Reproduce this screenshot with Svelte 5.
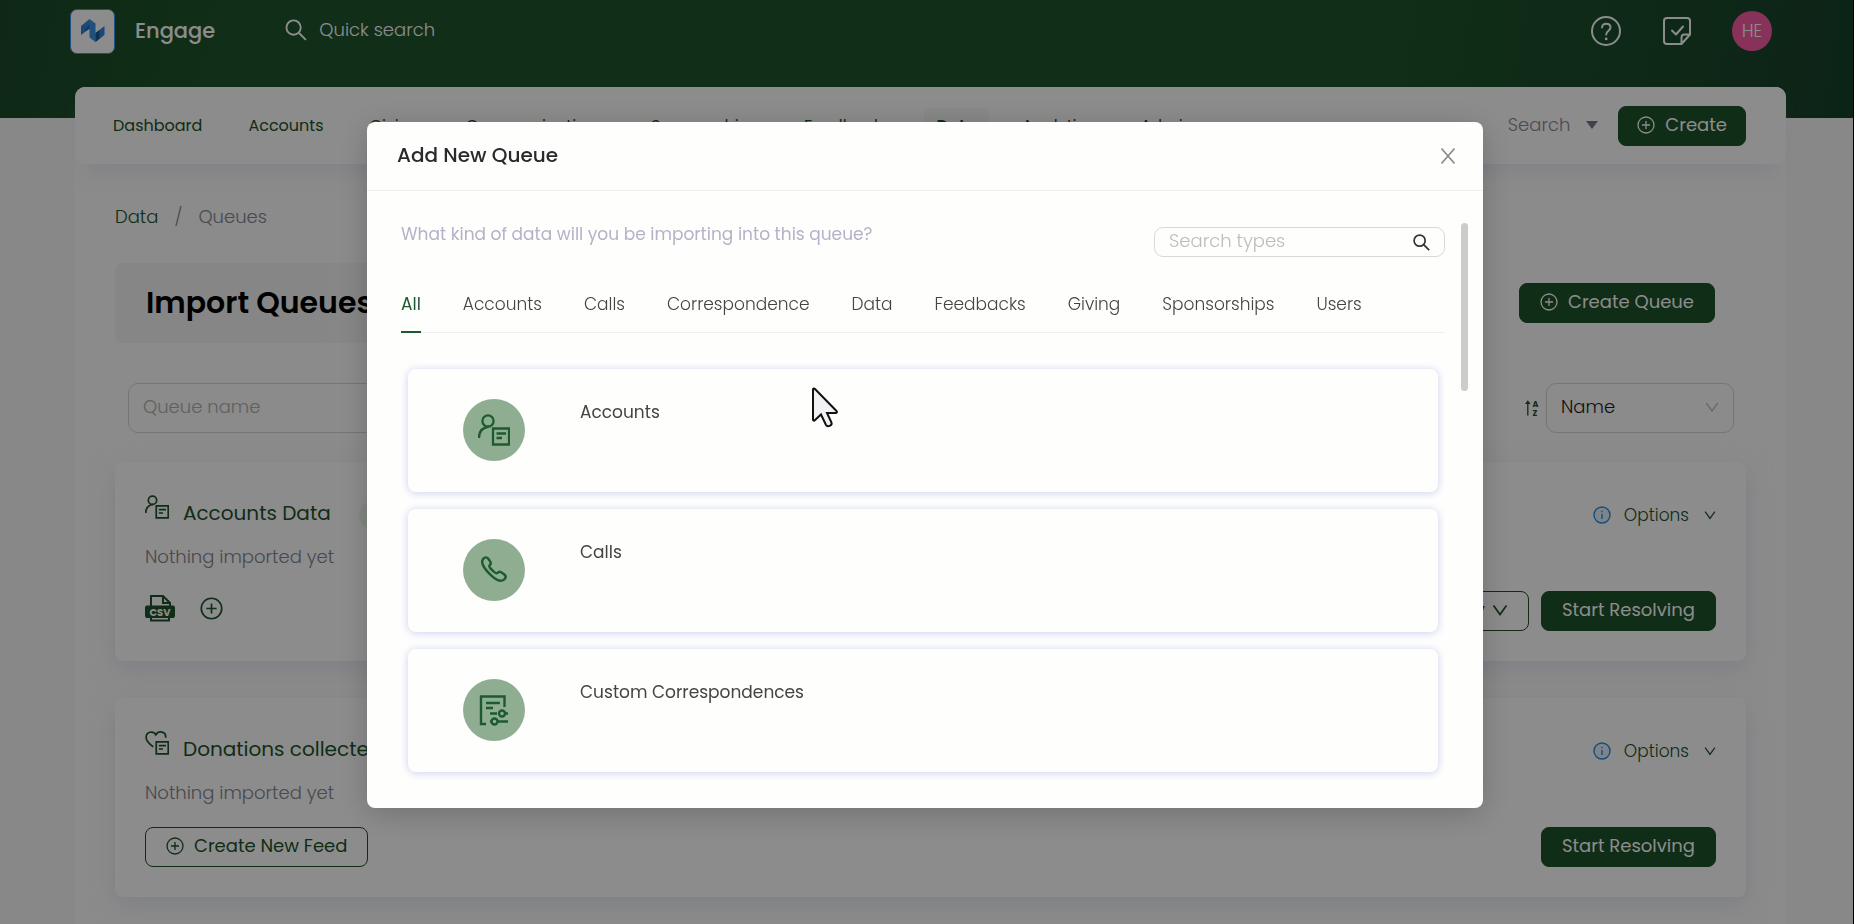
<script>
  const navBefore = ['Dashboard', 'Accounts', 'Giving', 'Communications', 'Sponsorships', 'Feedbacks'];
  const navAfter = ['Analytics', 'Admin'];
  const tabs = ['All', 'Accounts', 'Calls', 'Correspondence', 'Data', 'Feedbacks', 'Giving', 'Sponsorships', 'Users'];
  const types = [
    { name: 'Accounts', icon: 'account' },
    { name: 'Calls', icon: 'phone' },
    { name: 'Custom Correspondences', icon: 'custom' }
  ];
  let activeTab = $state('All');
</script>

{#snippet plus(size)}
  <svg width={size} height={size} viewBox="0 0 18 18" fill="none" stroke="currentColor" stroke-width="1.3" aria-hidden="true">
    <circle cx="9" cy="9" r="8" /><path d="M9 5v8M5 9h8" />
  </svg>
{/snippet}

{#snippet chevron(size, weight)}
  <svg width={size} height={size} viewBox="0 0 16 16" fill="none" stroke="currentColor" stroke-width={weight} aria-hidden="true">
    <path d="M1.5 3.5 8 12.5l6.500-9" />
  </svg>
{/snippet}

{#snippet account(size)}
  <svg width={size} height={size} viewBox="0 0 32 32" fill="none" stroke="currentColor" stroke-width="2.300" aria-hidden="true">
    <circle cx="10" cy="7" r="5.600" />
    <path d="M1 24c0-6 3.500-10.500 10-11.500M15 14.500h16v16H15zM18.500 19.500h9.500M18.500 24h5.500" />
  </svg>
{/snippet}

{#snippet heart(size)}
  <svg width={size} height={size} viewBox="0 0 32 32" fill="none" stroke="currentColor" stroke-width="2.300" aria-hidden="true">
    <path d="M11 21C5 16.500 1.500 13 1.500 8.500c0-7.500 9.500-9.500 13-3.500 3.500-6 14-4.500 13 4M15 14.500h16v16H15zM18.500 19.500h9.500M18.500 24h5.500" />
  </svg>
{/snippet}

{#snippet search(size, weight)}
  <svg width={size} height={size} viewBox="0 0 20 20" fill="none" stroke="currentColor" stroke-width={weight} aria-hidden="true">
    <circle cx="7.800" cy="7.800" r="6.500" /><path d="M12.500 12.500 19 19" />
  </svg>
{/snippet}

{#snippet options()}
  <div class="options">
    <svg width="18" height="18" viewBox="0 0 18 18" fill="none" stroke="#2b8cdf" stroke-width="1.400" aria-hidden="true">
      <circle cx="9" cy="9" r="8" fill="#e3f1fc" /><path d="M9 8v5M9 4.800v1.500" />
    </svg>
    <button class="plain">Options {@render chevron(12, 1.6)}</button>
  </div>
{/snippet}

<div class="app">
  <header class="top">
    <a class="brand" href="#home">
      <span class="logo">
        <svg width="24" height="24" viewBox="0 0 24 24" aria-hidden="true">
          <path fill="#2f86d8" d="M0 7 8.500 0 10 9 4.500 12.500 0 16z" />
          <path fill="#3b93e4" d="M8.500 0 14.500 4.500V23L8.500 18.500z" />
          <path fill="#1f6cb0" d="M4.500 9.500 8.500 6v3.500l-4 3z" />
          <path fill="#2f86d8" d="M14.500 14 23.500 7v9l-9 7z" />
          <path fill="#1a5c98" d="m14.500 14 4-3v8.500l-4 3.500z" />
        </svg>
      </span>
      <span>Engage</span>
    </a>
    <button class="quick">{@render search(22, 1.7)} Quick search</button>
    <div class="top-actions">
      <button class="bare" aria-label="Help">
        <svg width="32" height="32" viewBox="0 0 32 32" fill="none" stroke="currentColor" stroke-width="2" stroke-linecap="round">
          <circle cx="16" cy="16" r="14" /><path d="M12 12.500c.3-5 8.500-5 8.500 0 0 3.200-4.300 3.200-4.300 7" /><path d="M16.200 23.800v.1" stroke-width="2.600" />
        </svg>
      </button>
      <button class="bare" aria-label="Tasks">
        <svg width="30" height="30" viewBox="0 0 30 30" fill="none" stroke="currentColor" stroke-width="2" stroke-linecap="round" stroke-linejoin="round">
          <path d="M28 18.500V5a3 3 0 0 0-3-3H5a3 3 0 0 0-3 3v20a3 3 0 0 0 3 3h14.500zM28 18.500h-5.500a3 3 0 0 0-3 3V28M10 14.500l4 4 7-8" />
        </svg>
      </button>
      <span class="avatar">HE</span>
    </div>
  </header>

  <main class="sheet">
    <nav class="nav">
      {#each navBefore as item}<a href="#{item}">{item}</a>{/each}
      <a class="current" href="#Data">Data</a>
      {#each navAfter as item}<a href="#{item}">{item}</a>{/each}
      <div class="nav-end">
        <button class="scope">Search <span class="caret"></span></button>
        <button class="primary">{@render plus(18)} Create</button>
      </div>
    </nav>

    <div class="content">
      <div class="crumbs"><a href="#Data">Data</a><span>/</span><span>Queues</span></div>

      <div class="title-row">
        <h1>Import Queues</h1>
        <button class="primary">{@render plus(18)} Create Queue</button>
      </div>

      <div class="filters">
        <input type="text" placeholder="Queue name" aria-label="Queue name" />
        <div class="sort">
          <svg width="16" height="24" viewBox="0 0 16 24" aria-hidden="true">
            <path d="M3.800 19.500V6" fill="none" stroke="#1d522a" stroke-width="1.300" />
            <path d="M1 8 3.800 4.300 6.600 8z" fill="#1d522a" />
            <text x="8.500" y="11" font-size="8" font-weight="700" fill="#1d522a">A</text>
            <text x="8.500" y="19.500" font-size="8" font-weight="700" fill="#1d522a">Z</text>
          </svg>
          <div class="select">
            <select aria-label="Sort by"><option>Name</option></select>
            {@render chevron(14, 1.3)}
          </div>
        </div>
      </div>

      <section class="queue">
        <div class="line">
          <h2>{@render account(24)} <span>Accounts Data</span> <i class="badge"></i></h2>
          {@render options()}
        </div>
        <p>Nothing imported yet</p>
        <div class="line">
          <div class="feeds">
            <svg width="30" height="28" viewBox="0 0 30 28" aria-hidden="true">
              <path d="M6 12V2h12l7 7v4M6 22v4.500h18V22M18 2v7h7" fill="none" stroke="#1d522a" stroke-width="2" />
              <rect x="0" y="11.500" width="30" height="12.500" rx="2" fill="#1d522a" />
              <text x="15" y="21.500" text-anchor="middle" font-size="10" font-weight="700" fill="#fff">CSV</text>
            </svg>
            <button class="bare" aria-label="Add feed">{@render plus(23)}</button>
          </div>
          <div class="actions">
            <button class="outline history">History {@render chevron(16, 1.7)}</button>
            <button class="primary">Start Resolving</button>
          </div>
        </div>
      </section>

      <section class="queue">
        <div class="line">
          <h2>{@render heart(24)} <span>Donations collected</span></h2>
          {@render options()}
        </div>
        <p>Nothing imported yet</p>
        <div class="line">
          <button class="outline">{@render plus(18)} Create New Feed</button>
          <button class="primary">Start Resolving</button>
        </div>
      </section>
    </div>
  </main>
</div>

<div class="overlay">
  <div class="modal" role="dialog" aria-modal="true" aria-labelledby="modal-title">
    <header class="modal-head">
      <h3 id="modal-title">Add New Queue</h3>
      <button class="bare" aria-label="Close">
        <svg width="16" height="16" viewBox="0 0 16 16" fill="none" stroke="currentColor" stroke-width="1.600"><path d="m1.500.5 13 15M14.500.5l-13 15" /></svg>
      </button>
    </header>
    <div class="modal-body">
      <div class="ask">
        <p>What kind of data will you be importing into this queue?</p>
        <label class="find">
          <input type="text" placeholder="Search types" aria-label="Search types" />
          {@render search(17, 2)}
        </label>
      </div>
      <div class="tabs" role="tablist">
        {#each tabs as tab}
          <button role="tab" aria-selected={tab === activeTab} class:active={tab === activeTab} onclick={() => (activeTab = tab)}>{tab}</button>
        {/each}
      </div>
      <div class="types">
        {#each types as type}
          <button class="type">
            <span class="disc">
              {#if type.icon === 'account'}
                {@render account(32)}
              {:else if type.icon === 'phone'}
                <svg width="31" height="31" viewBox="0 0 34 34" fill="none" stroke="currentColor" stroke-width="2.700" stroke-linejoin="round">
                  <path d="M4.500 4.500C6.500 2 8.500 2 10.500 4.500l2 3c1.200 2 0 3-1 4-.8 1 .3 2.500 3 5.200s4.500 4 5.500 3.200c1-1 2.500-2.200 4.300-1l3.500 2.400c2.200 1.700 2 3.700-.4 5.700-3 2.500-7.500 1.500-14.400-5S1.500 8.500 4.500 4.500z" />
                </svg>
              {:else}
                <svg width="34" height="34" viewBox="0 0 34 34" fill="none" stroke="currentColor" stroke-width="2.400">
                  <path d="M9 31H4V3.500h23.500V14M9 10h14M9 15h7M13 20.500h7M27 20.500h4M13 28.500h1M21 28.500h10" />
                  <circle cx="25" cy="20.500" r="3" /><circle cx="17.500" cy="28.500" r="3" />
                </svg>
              {/if}
            </span>
            <span class="type-name">{type.name}</span>
          </button>
        {/each}
      </div>
      <span class="thumb"></span>
    </div>
  </div>
  <svg class="pointer" width="28" height="42" viewBox="0 0 28 42" aria-hidden="true">
    <path d="M2 2.500v30c0 1.200 1 1.500 1.800.7L10 27.500l5 10.500c1.500 2.500 6.500.8 5.500-2.500L16 26h8.500c1.500 0 1.800-1.200 1-2L4 2c-.9-.8-2-.5-2 .5z" fill="#f2f2f4" stroke="#111" stroke-width="2" />
  </svg>
</div>

<style>
  :global(body) { background: #f8f8fa; overflow: hidden; }
  :global(*) { box-sizing: border-box; }
  .app, .overlay { font-family: Poppins, Inter, sans-serif; font-size: 17px; line-height: 24px; color: #1d522a; }
  .app { height: 100vh; overflow: hidden; background: #f8f8fa; }
  a { color: inherit; text-decoration: none; }
  button, input, select { font: inherit; color: inherit; }
  button { display: inline-flex; align-items: center; border: 0; padding: 0; background: none; cursor: pointer; white-space: nowrap; }
  svg { flex: none; display: block; }
  h1, h2, h3, p { margin: 0; }

  .top { display: flex; align-items: center; height: 118px; padding: 0 82px 56px 70px; color: #fff; background: linear-gradient(100deg, #1b4a27 0, #1e542c 12%, #1e542c 75%, #1b4b2a 88%, #17402a 100%); }
  .brand { display: flex; align-items: center; gap: 20px; font-size: 21px; font-weight: 500; }
  .logo { display: grid; place-items: center; width: 45px; height: 45px; border-radius: 7px; background: #fff; border: 1px solid #3b93e4; }
  .quick { gap: 12px; margin-left: 70px; padding-bottom: 2px; font-size: 18px; font-weight: 300; }
  .top-actions { display: flex; align-items: center; gap: 40px; margin-left: auto; }
  .avatar { display: grid; place-items: center; width: 40px; height: 40px; border-radius: 50%; background: #f85ca5; font-size: 17px; font-weight: 300; }

  .sheet { min-height: 900px; margin: -31px 68px 0 75px; border-radius: 10px; background: #fdfdfd; }
  .nav { display: flex; align-items: center; gap: 46px; height: 77px; padding: 0 40px 0 38px; border-radius: 10px; background: #fff; box-shadow: 0 18px 20px -10px #dfe1ee90; }
  .nav > a { font-size: 16px; line-height: 36px; }
  .nav .current { margin: 0 -13px; padding: 0 13px; border-radius: 8px; background: #f8f8f8; font-weight: 600; }
  .nav-end { display: flex; gap: 20px; align-items: center; margin-left: auto; }
  .scope { gap: 16px; padding-bottom: 2px; font-size: 18px; font-weight: 300; color: #8a8a98; }
  .caret { border: 6px solid transparent; border-top: 8px solid #777785; border-bottom: 0; }
  .primary, .outline { justify-content: center; gap: 10px; height: 40px; padding: 0 20px 2px; border: 1px solid #1d522a; border-radius: 8px; font-size: 18px; }
  .nav .primary { padding: 0 18px 2px; }
  .primary { background: #1d522a; color: #fff; }

  .content { padding: 41px 40px 0; }
  .crumbs { display: flex; gap: 16px; font-size: 18px; font-weight: 300; }
  .crumbs span { color: #85858f; }
  .title-row { display: flex; align-items: center; justify-content: space-between; height: 80px; margin-top: 34px; padding: 0 31px; border-radius: 8px; background: linear-gradient(90deg, #f4f4f5 0, #fdfdfd 80%); }
  h1 { font-size: 30px; line-height: 40px; font-weight: 600; color: #000; }
  .filters { display: flex; justify-content: space-between; margin: 40px 12px 29px 13px; }
  .filters input, .select { height: 50px; padding: 0 14px 2px; border: 1px solid #d5d5d8; border-radius: 10px; background: none; }
  .filters input { width: 45%; padding-bottom: 4px; font-size: 18px; font-weight: 300; }
  .filters input::placeholder { color: #b0b0b0; opacity: 1; }
  .sort { display: flex; align-items: center; gap: 6px; }
  .select { display: flex; align-items: center; width: 188px; color: #b8b8b8; }
  select { flex: 1; appearance: none; border: 0; background: none; color: #222; font-weight: 300; font-size: 18px; }

  .queue { height: 199px; margin-bottom: 37px; padding: 31px 30px 0; border-radius: 8px; background: #fff; box-shadow: 0 8px 24px #d4d8ea90; }
  .line { display: flex; align-items: center; justify-content: space-between; }
  .queue h2 { display: flex; gap: 14px; font-size: 20px; line-height: 24px; font-weight: 400; }
  .queue h2 span { padding-top: 6px; }
  .badge { width: 60px; height: 28px; margin: 6px 0 -4px 14px; border-radius: 14px; background: #eef7ea; }
  .options { display: flex; align-items: center; gap: 13px; padding-top: 10px; }
  .plain { gap: 15px; font-size: 17px; font-weight: 300; }
  .queue p { margin: 18px 0 22px; font-size: 18px; font-weight: 300; color: #85858f; }
  .feeds { display: flex; align-items: center; gap: 25px; padding-bottom: 6px; }
  .actions { display: flex; gap: 12px; }
  .history { gap: 7px; }

  .overlay { position: fixed; inset: 0; display: flex; justify-content: center; align-items: flex-start; padding: 122px 67px 0 64px; border-right: 1px solid #000; background: rgba(0, 0, 0, 0.45); }
  .modal { width: 100%; max-width: 1116px; border-radius: 8px; background: #fefefd; box-shadow: 0 6px 32px rgba(0, 0, 0, 0.2); color: #444; }
  .modal-head { display: flex; align-items: center; justify-content: space-between; height: 69px; padding: 0 27px 0 30px; border-bottom: 1px solid #f0f0f0; color: #888; }
  h3 { padding-bottom: 2px; font-size: 20px; font-weight: 500; color: #2a2a2d; }
  .modal-body { position: relative; padding: 31px 38px 36px 34px; }
  .ask { display: flex; justify-content: space-between; font-size: 17px; font-weight: 400; color: #b3b3c8; }
  .find { display: flex; align-items: center; width: 291px; height: 30px; margin-top: 5px; padding: 0 14px; border: 1px solid #d9d9d9; border-radius: 9px; color: #333; }
  .find input { flex: 1; min-width: 0; padding: 0 0 2px; border: 0; background: none; outline: none; font-size: 18px; font-weight: 300; }
  .find input::placeholder { color: #bcbcbf; opacity: 1; }
  .tabs { display: flex; gap: 42px; height: 58px; margin: 18px 0 36px; border-bottom: 1px solid #f0f0f0; }
  .tabs button { height: 58px; padding-top: 2px; border-bottom: 2px solid transparent; font-weight: 300; }
  .tabs .active { color: #1d5a30; border-color: #1d5a30; font-weight: 400; }
  .types { display: flex; flex-direction: column; gap: 17px; margin: 0 7px; }
  .type { align-items: flex-start; gap: 55px; height: 123px; padding: 30px 55px; border-radius: 8px; background: #fefefd; box-shadow: 0 1px 8px #ccd0ee; }
  .disc { display: grid; place-items: center; width: 62px; height: 62px; border-radius: 50%; background: #8fae91; color: #1d5a30; }
  .type-name { padding-top: 1px; font-weight: 400; }
  .thumb { position: absolute; top: 32px; right: 15px; width: 7px; height: 168px; border-radius: 4px; background: #ccc; }
  .pointer { position: absolute; left: 811px; top: 387px; }
</style>
